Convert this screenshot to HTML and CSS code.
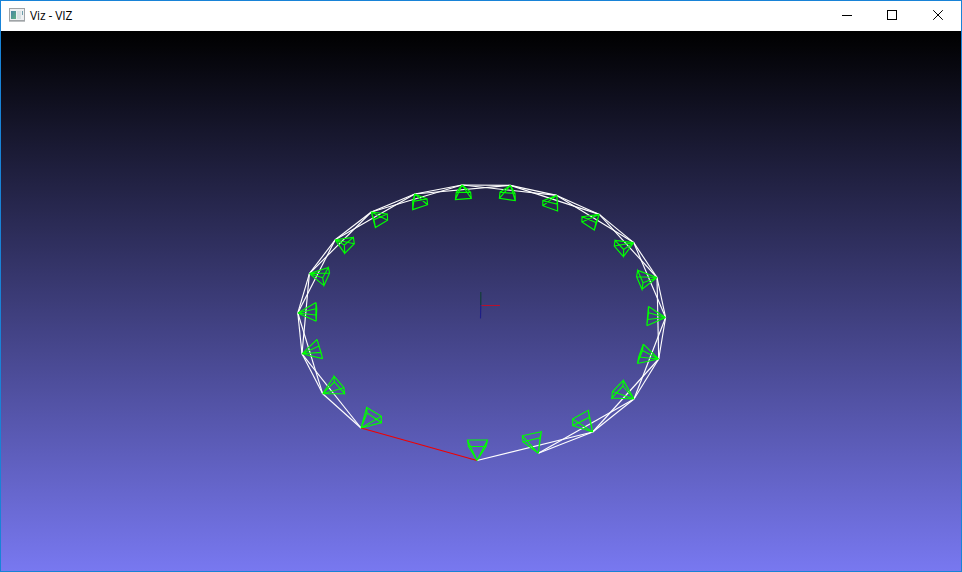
FILE: index.html
```html
<!DOCTYPE html>
<html lang="en">
<head>
<meta charset="utf-8">
<title>Viz - VIZ</title>
<link rel="stylesheet" href="styles.css">
</head>
<body>
<div class="window">
  <header class="titlebar">
    <svg class="app-icon" width="16" height="14" viewBox="0 0 16 14">
      <defs><linearGradient id="pane" x1="0" y1="0" x2="1" y2="1"><stop offset="0" stop-color="#4684a3"/><stop offset="1" stop-color="#5fb184"/></linearGradient></defs>
      <rect x=".5" y=".5" width="15" height="12" fill="#eef0f2" stroke="#a0a4a7"/>
      <path d="M0 13.5H16" stroke="#bfc2c4"/>
      <rect x="2" y="3" width="5" height="8" fill="url(#pane)"/>
      <rect x="8" y="3" width="4" height="8" fill="#d9e2e4"/>
      <rect x="13" y="3" width="1" height="4" fill="#6e9fac"/>
    </svg>
    <span class="title">Viz - VIZ</span>
    <div class="controls">
      <span class="control"><svg width="10" height="10"><path d="M0 5.5H10"/></svg></span>
      <span class="control"><svg width="10" height="10"><rect x=".5" y=".5" width="9" height="9"/></svg></span>
      <span class="control"><svg width="10" height="10"><path class="smooth" d="M.2 .2L9.8 9.8M9.8 .2L.2 9.8"/></svg></span>
    </div>
  </header>
  <main class="viewport">
    <svg class="scene" id="scene" width="960" height="540" viewBox="1 31 960 540">
      <path class="axis-y" d="M480.8 292V305"/>
      <path class="axis-z" d="M480.8 305L480.5 318.5"/>
      <path class="axis-x" d="M481.5 305.5H500"/>
    </svg>
  </main>
</div>
<script src="scene.js"></script>
</body>
</html>
```
FILE: styles.css
```css
body {
  margin: 0;
}
.window {
  box-sizing: border-box;
  width: 962px;
  height: 572px;
  border: 1px solid #1883d7;
  display: flex;
  flex-direction: column;
  overflow: hidden;
}
.titlebar {
  height: 30px;
  flex: none;
  display: flex;
  align-items: center;
  background: #fff;
}
.app-icon {
  margin: 0 5px 2px 8px;
}
.title {
  font: 12px/16px "Open Sans", "Noto Sans", sans-serif;
  letter-spacing: -0.1px;
  color: #000;
}
.controls {
  display: flex;
  margin-left: auto;
}
.control {
  width: 46px;
  height: 30px;
  display: flex;
  align-items: center;
  justify-content: center;
  padding-bottom: 2px;
  box-sizing: border-box;
}
.control:nth-child(2) {
  width: 45px;
  padding-right: 1px;
}
.control path,
.control rect {
  fill: none;
  stroke: #000;
  shape-rendering: crispEdges;
}
.control .smooth {
  shape-rendering: auto;
}
.viewport {
  flex: 1;
  background: linear-gradient(#000, #7878f0);
}
.scene {
  display: block;
}
.scene path {
  fill: none;
  stroke-width: 1.15;
}
.scene .link {
  stroke: #fff;
}
.scene .closing {
  stroke: #f00000;
}
.scene .camera {
  stroke: #00ff00;
}
.scene .axis-x {
  stroke: #b8102c;
  stroke-width: 1;
}
.scene .axis-y {
  stroke: #123d35;
}
.scene .axis-z {
  stroke: #1e1e86;
}
```
FILE: scene.js
```js
// Each camera: apex, followed by the four corners of its image plane.
const cameras = [
  [[477,460.5],[467.5,440],[487.5,440],[486,446.5],[468.5,446.5]],
  [[538.3,453.3],[522.3,435.7],[541.3,431.7],[540,437.7],[523,441.7]],
  [[592.7,432],[572.6,419],[588.3,410.3],[589.3,417.3],[572.7,425.5]],
  [[634,399],[623.3,380.4],[612.5,391.5],[611.8,398],[623,386]],
  [[658.7,359],[643.3,344.2],[638.7,357],[637.4,363.5],[642.5,350.5]],
  [[665.6,317.5],[648.5,306.4],[647.3,319.5],[646.8,325.7],[648.6,312.7]],
  [[657,277.5],[637.7,270.4],[636.6,276.7],[642,289.3],[643,282.7]],
  [[633.7,242.6],[615,240.4],[614.3,246],[623.4,256.6],[623.7,249.5]],
  [[599.3,214.4],[582,216.7],[581.9,222],[594.3,230],[596,222.5]],
  [[556.8,195.4],[542.8,200.7],[542.8,205.7],[557.6,211],[557.6,204.3]],
  [[510.4,185.4],[500,192.3],[499.4,198.3],[515.3,200.6],[515,193.5]],
  [[462,185],[456.3,192.3],[455.4,199.6],[471.3,198.4],[470.6,192.3]],
  [[414.8,194],[412.7,201.4],[412.7,209.6],[427.6,204.7],[427,199]],
  [[371.3,212],[374,219.7],[375.4,227.6],[387.6,220.3],[387.3,214]],
  [[335.2,239.8],[344.4,245],[344.7,253.3],[354.3,243.7],[353.4,237.4]],
  [[309.4,273.6],[328.3,267.5],[329.6,273],[324,285.6],[322.7,277.8]],
  [[297.8,313],[316,302.5],[316.8,308.5],[316.2,321.3],[315.8,315]],
  [[302,353.8],[317,339.5],[319,346],[322.6,358.6],[321,352.4]],
  [[322.7,393.8],[334,376.2],[344,387.7],[344.6,393.5],[334.3,382]],
  [[361,428],[366.7,407.4],[381.4,416.3],[381.4,422.6],[367,413]]
];

const scene = document.getElementById("scene");
const last = cameras.length - 1;

function draw(kind, d) {
  const path = document.createElementNS("http://www.w3.org/2000/svg", "path");
  path.setAttribute("class", kind);
  path.setAttribute("d", d);
  scene.appendChild(path);
}

for (let i = 0; i <= last; i++) {
  for (const j of [i + 1, i + 2]) {
    if (j > last || (i === 0 && j === 1)) continue;
    draw("link", `M${cameras[i][0]}L${cameras[j][0]}`);
  }
}
draw("closing", `M${cameras[last][0]}L${cameras[0][0]}`);
for (const [apex, ...corners] of cameras) {
  draw("camera", `M${corners.join("L")}Z` + corners.map(c => `M${apex}L${c}`).join(""));
}
```
